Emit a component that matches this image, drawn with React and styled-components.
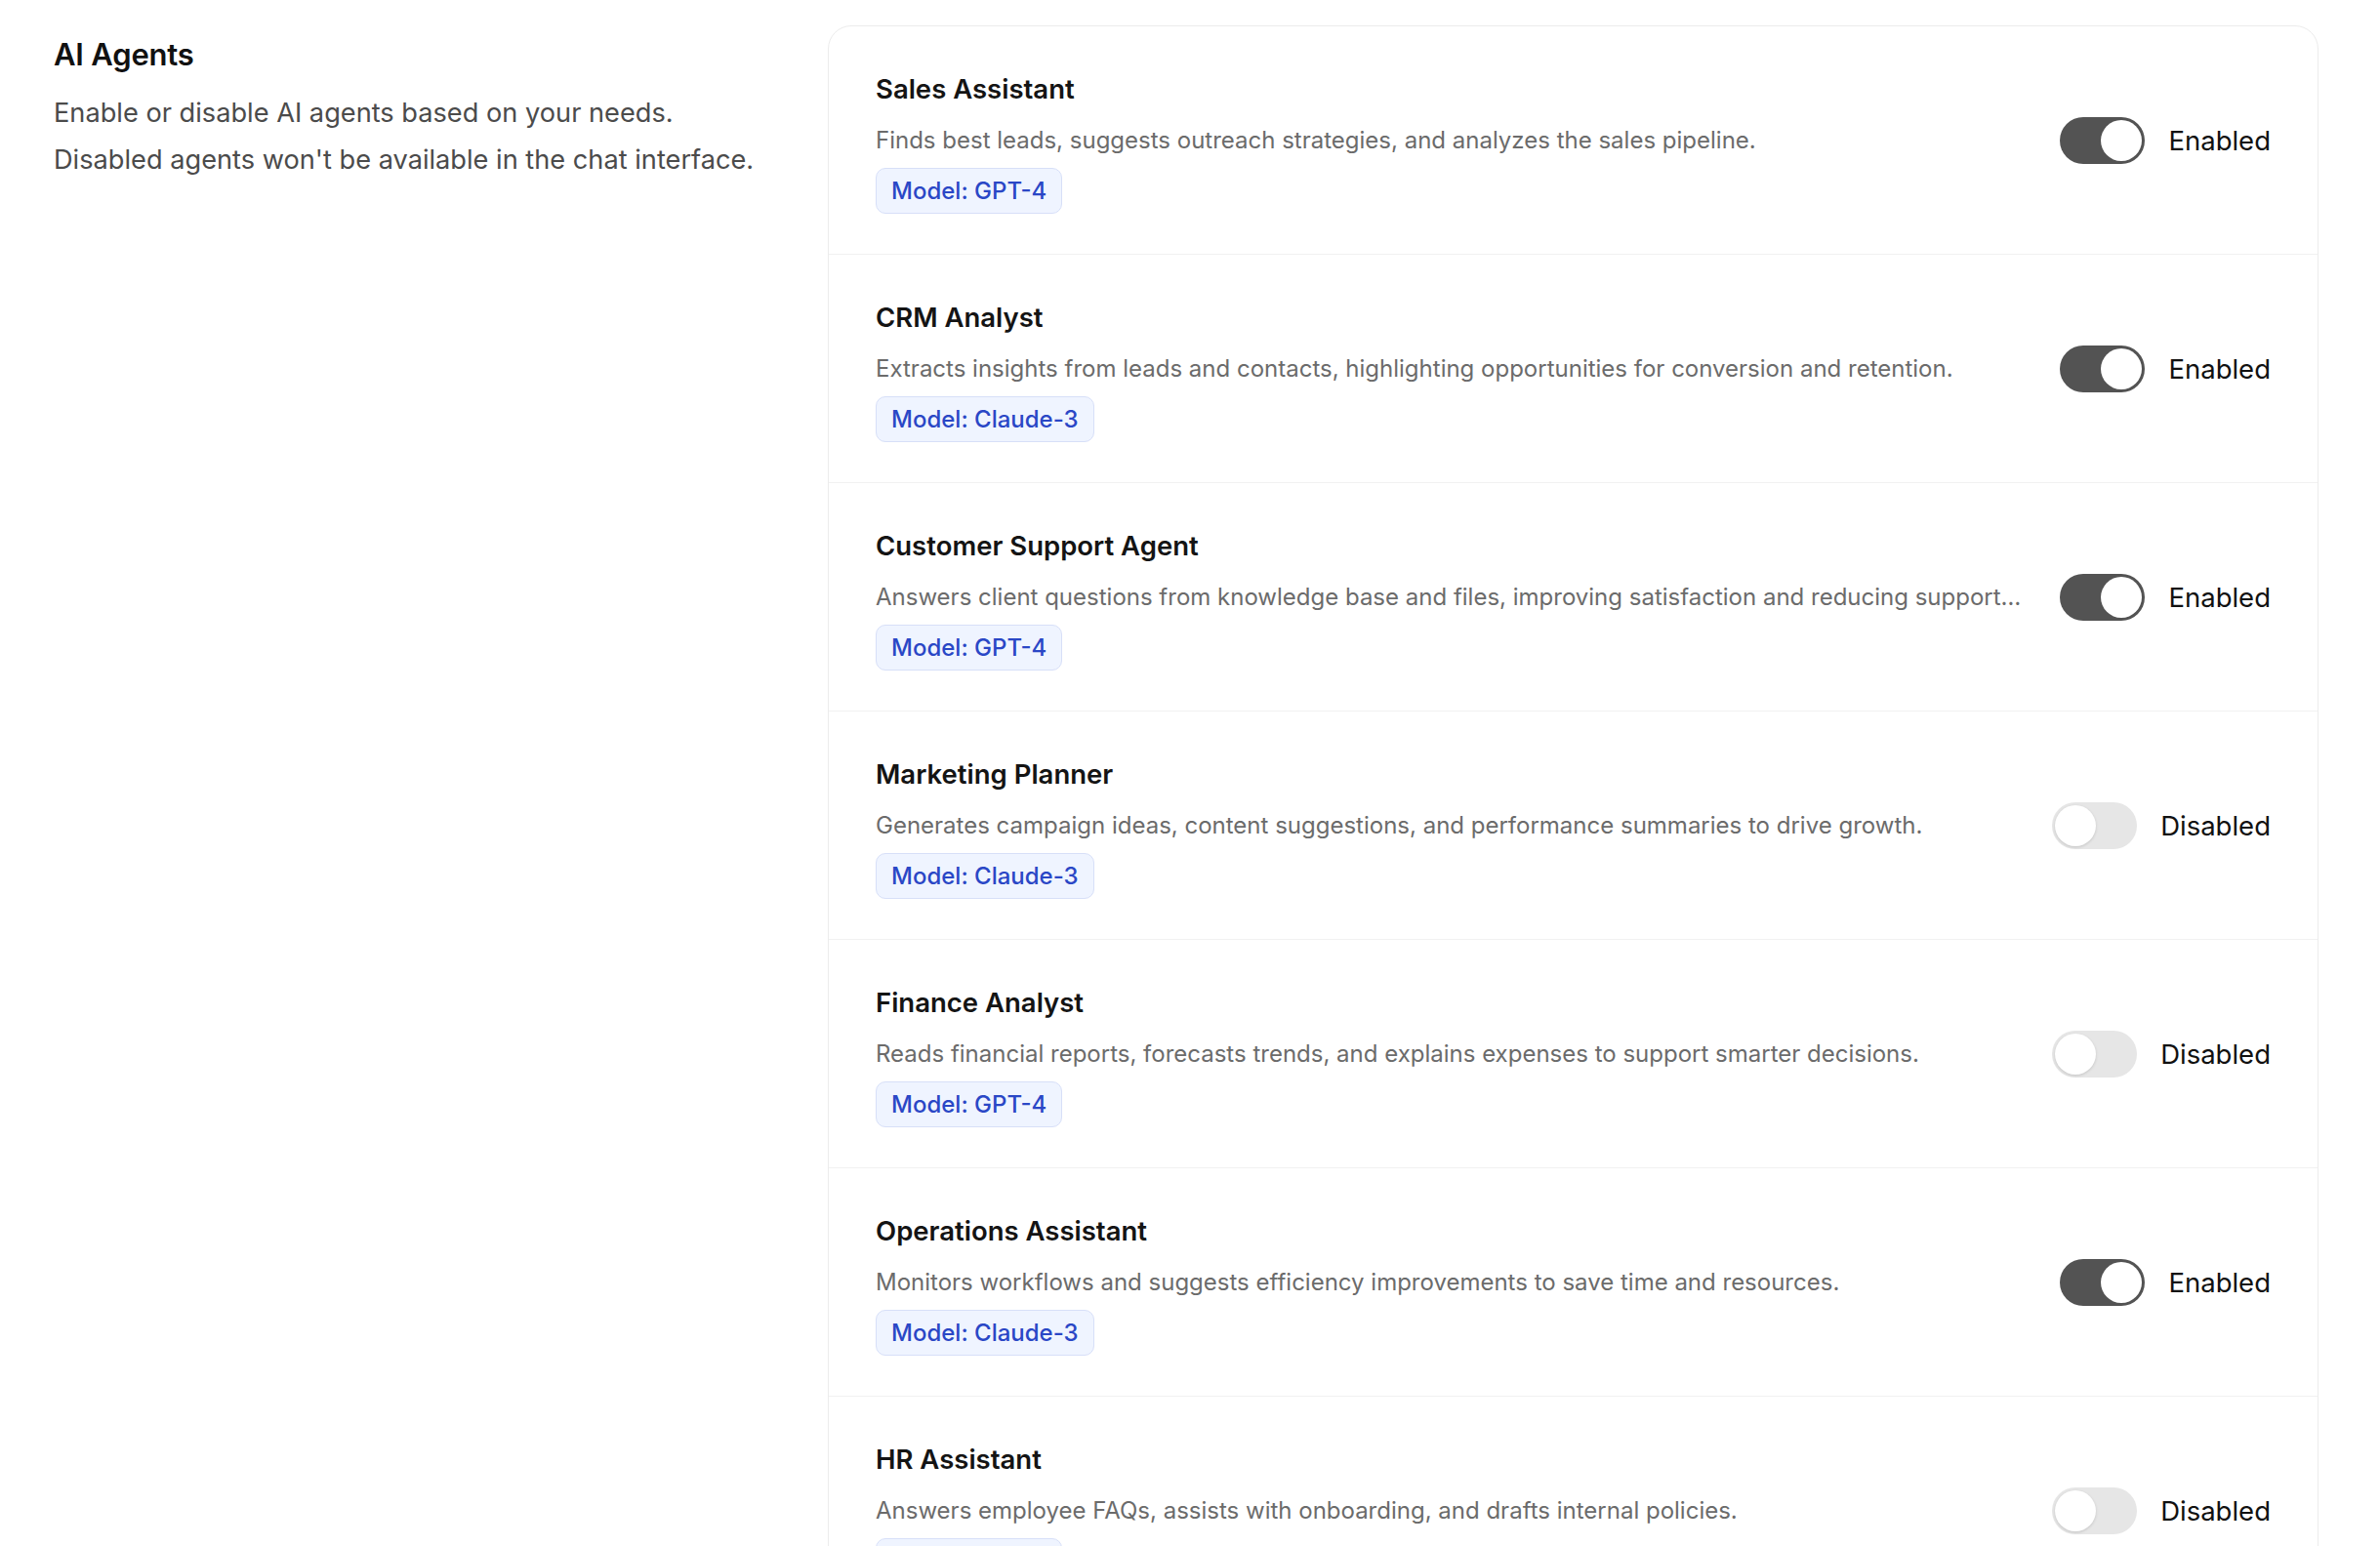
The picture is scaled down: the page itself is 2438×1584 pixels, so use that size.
import React, { useState } from "react";
import styled, { createGlobalStyle } from "styled-components";

const GlobalStyle = createGlobalStyle`
  body {
    margin: 0;
    background: #ffffff;
    font-family: Inter, "Noto Sans", "Liberation Sans", sans-serif;
    -webkit-font-smoothing: antialiased;
  }
`;

const Page = styled.div`
  display: grid;
  grid-template-columns: 764px 1fr;
  column-gap: 29px;
  padding: 26px 63px 40px 55px;
  align-items: start;
`;

const Intro = styled.div`
  padding-top: 11px;
`;

const IntroTitle = styled.h2`
  margin: 0;
  font-size: 31px;
  line-height: 38px;
  font-weight: 600;
  color: #111111;
  letter-spacing: -0.2px;
`;

const IntroText = styled.p`
  margin: 17px 0 0;
  font-size: 27.2px;
  line-height: 48px;
  color: #4b4b4b;
`;

const Card = styled.div`
  border: 1px solid #ececec;
  border-radius: 24px;
  background: #ffffff;
  overflow: hidden;
`;

const Row = styled.div`
  display: flex;
  align-items: center;
  gap: 36px;
  padding: 41px 48px;
  border-bottom: 1px solid #f1f1f1;
  &:last-child {
    border-bottom: none;
  }
`;

const Info = styled.div`
  flex: 1;
  min-width: 0;
  padding-top: 7px;
  display: flex;
  flex-direction: column;
  align-items: flex-start;
`;

const AgentName = styled.div`
  font-size: 27.5px;
  line-height: 33px;
  font-weight: 600;
  color: #141414;
`;

const AgentDesc = styled.div`
  align-self: stretch;
  margin-top: 18px;
  font-size: 24px;
  line-height: 36px;
  color: #6b6b6b;
  white-space: nowrap;
  overflow: hidden;
  text-overflow: ellipsis;
`;

const ModelBadge = styled.span`
  display: block;
  margin-top: 10px;
  padding: 8px 15px;
  font-size: 24px;
  line-height: 29px;
  font-weight: 500;
  color: #2a47c6;
  background: #eff4ff;
  border: 1px solid #d7dff8;
  border-radius: 10px;
`;

const ToggleWrap = styled.label`
  display: flex;
  align-items: center;
  gap: 24px;
  flex-shrink: 0;
  cursor: pointer;
`;

const Track = styled.span`
  position: relative;
  display: block;
  width: 87px;
  height: 48px;
  border-radius: 24px;
  background: ${(p) => (p.$on ? "#535353" : "#e6e6e6")};
  transition: background 0.2s;
`;

const Knob = styled.span`
  position: absolute;
  top: 3px;
  left: ${(p) => (p.$on ? "42px" : "3px")};
  width: 42px;
  height: 42px;
  border-radius: 50%;
  background: #ffffff;
  box-shadow: ${(p) => (p.$on ? "none" : "0 1px 3px rgba(0,0,0,0.15)")};
  transition: left 0.2s;
`;

const ToggleLabel = styled.span`
  font-size: 27.5px;
  line-height: 34px;
  color: #111111;
`;

const agentList = [
  {
    name: "Sales Assistant",
    desc: "Finds best leads, suggests outreach strategies, and analyzes the sales pipeline.",
    model: "GPT-4",
    on: true,
  },
  {
    name: "CRM Analyst",
    desc: "Extracts insights from leads and contacts, highlighting opportunities for conversion and retention.",
    model: "Claude-3",
    on: true,
  },
  {
    name: "Customer Support Agent",
    desc: "Answers client questions from knowledge base and files, improving satisfaction and reducing support workload.",
    model: "GPT-4",
    on: true,
  },
  {
    name: "Marketing Planner",
    desc: "Generates campaign ideas, content suggestions, and performance summaries to drive growth.",
    model: "Claude-3",
    on: false,
  },
  {
    name: "Finance Analyst",
    desc: "Reads financial reports, forecasts trends, and explains expenses to support smarter decisions.",
    model: "GPT-4",
    on: false,
  },
  {
    name: "Operations Assistant",
    desc: "Monitors workflows and suggests efficiency improvements to save time and resources.",
    model: "Claude-3",
    on: true,
  },
  {
    name: "HR Assistant",
    desc: "Answers employee FAQs, assists with onboarding, and drafts internal policies.",
    model: "GPT-4",
    on: false,
  },
];

function AgentToggle({ on, onToggle }) {
  return (
    <ToggleWrap onClick={onToggle}>
      <Track $on={on}>
        <Knob $on={on} />
      </Track>
      <ToggleLabel>{on ? "Enabled" : "Disabled"}</ToggleLabel>
    </ToggleWrap>
  );
}

export default function App() {
  const [agents, setAgents] = useState(agentList);

  const toggleAgent = (idx) => {
    setAgents((prev) =>
      prev.map((a, i) => (i === idx ? { ...a, on: !a.on } : a))
    );
  };

  return (
    <>
      <GlobalStyle />
      <Page>
        <Intro>
          <IntroTitle>AI Agents</IntroTitle>
          <IntroText>
            Enable or disable AI agents based on your needs.
            <br />
            Disabled agents won't be available in the chat interface.
          </IntroText>
        </Intro>
        <Card>
          {agents.map((a, i) => (
            <Row key={a.name}>
              <Info>
                <AgentName>{a.name}</AgentName>
                <AgentDesc>{a.desc}</AgentDesc>
                <ModelBadge>Model: {a.model}</ModelBadge>
              </Info>
              <AgentToggle on={a.on} onToggle={() => toggleAgent(i)} />
            </Row>
          ))}
        </Card>
      </Page>
    </>
  );
}
